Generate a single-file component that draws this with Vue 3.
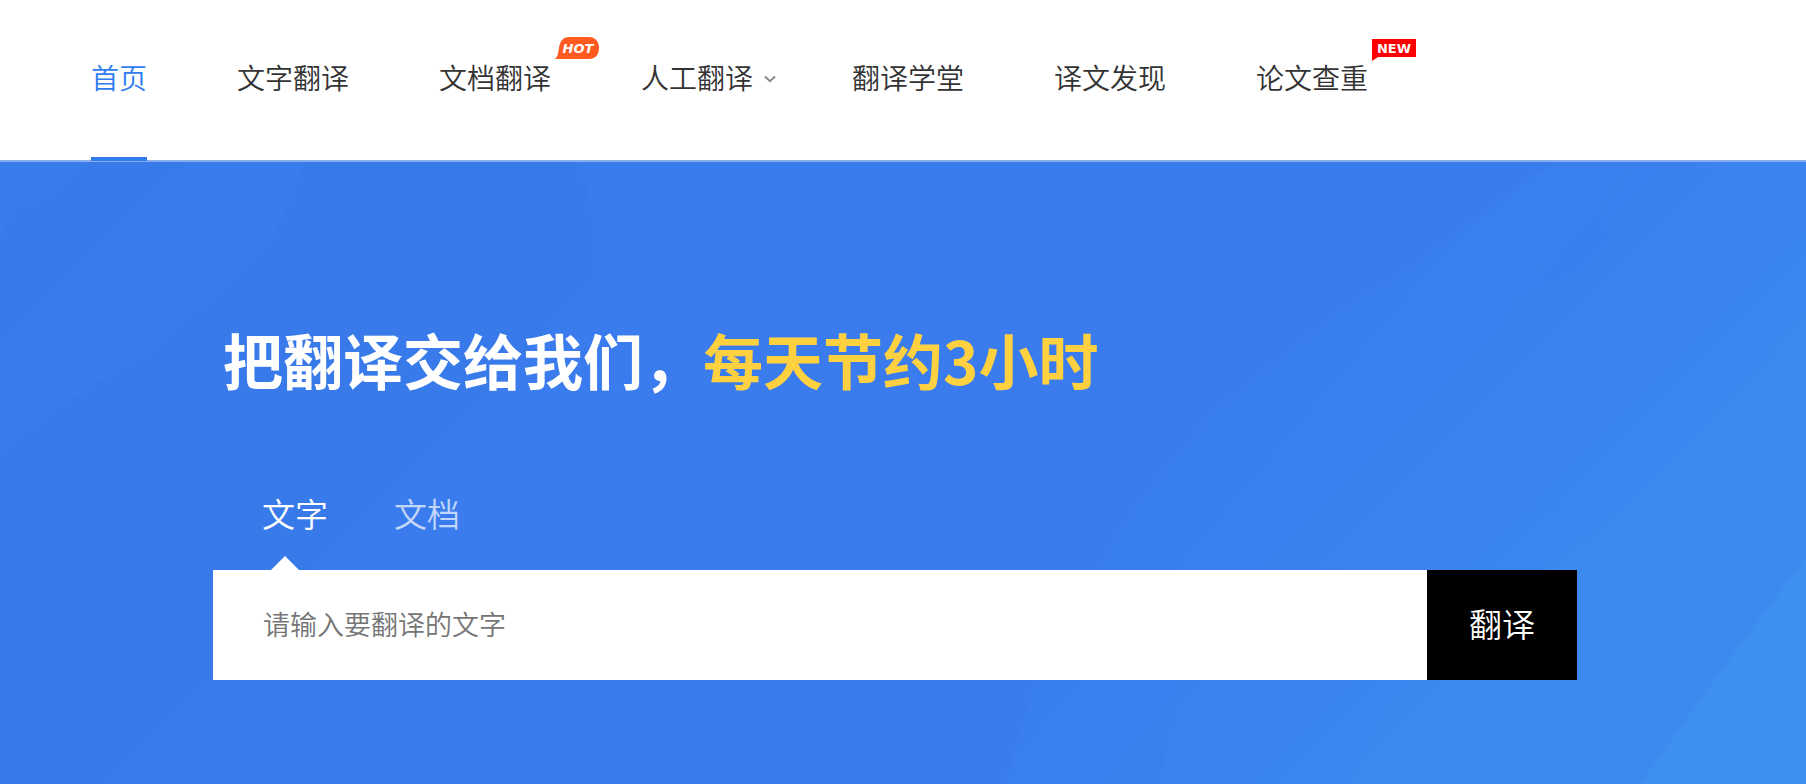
<script setup>
import { ref } from 'vue'

const navItems = [
  { label: '首页', active: true },
  { label: '文字翻译' },
  { label: '文档翻译', badge: 'hot' },
  { label: '人工翻译', dropdown: true },
  { label: '翻译学堂' },
  { label: '译文发现' },
  { label: '论文查重', badge: 'new' },
]
const tabs = ['文字', '文档']
const current = ref(0)
const query = ref('')
</script>

<template>
  <div class="page">
    <header class="header">
      <nav class="nav">
        <a
          v-for="item in navItems"
          :key="item.label"
          href="#"
          class="nav-link"
          :class="{ active: item.active, dropdown: item.dropdown }"
        >
          {{ item.label }}
          <svg v-if="item.dropdown" class="chevron" viewBox="0 0 12 8" aria-hidden="true">
            <path d="M1 1.5 L6 6.2 L11 1.5" fill="none" stroke="#888" stroke-width="2" />
          </svg>
          <svg v-if="item.badge === 'hot'" class="badge" viewBox="0 0 44 24">
            <path d="M14 0 H34 C40 0 44 4 44 11 C44 18 40 22 34 22 H0 C3 19 3 17 4 11 C5 4 8 0 14 0Z" fill="#ff5a1f" />
            <text x="23" y="16" class="badge-text hot">HOT</text>
          </svg>
          <svg v-if="item.badge === 'new'" class="badge" viewBox="0 0 44 24">
            <path d="M0 2 H44 V20 H6 L0 24Z" fill="#ff0000" />
            <text x="22" y="16" class="badge-text">NEW</text>
          </svg>
        </a>
      </nav>
    </header>

    <main class="hero">
      <svg class="backdrop" viewBox="0 0 1806 622" preserveAspectRatio="none" aria-hidden="true">
        <defs>
          <linearGradient id="mid" gradientUnits="userSpaceOnUse" x1="1250" y1="200" x2="1600" y2="500">
            <stop offset="0" stop-color="#397eee" />
            <stop offset="1" stop-color="#3b84ee" />
          </linearGradient>
          <linearGradient id="far" gradientUnits="userSpaceOnUse" x1="1400" y1="200" x2="1700" y2="500">
            <stop offset="0" stop-color="#3a80ef" />
            <stop offset="1" stop-color="#3c8aef" />
          </linearGradient>
        </defs>
        <rect width="1806" height="622" fill="#397aeb" />
        <path d="M0 0 H86 L30 46 L20 38 L0 76Z" fill="#3a7cec" />
        <path d="M187 0 H305 L275 70 L235 112 L150 187 L50 250 L0 290 V187Z" fill="#3a7ced" />
        <path d="M580 0 L594 60 L592 122 L320 405 L213 518 L105 622 H1806 V0Z" fill="#3a7ced" />
        <path d="M1553 0 L1405 110 L1340 150 L1215 250 L1140 340 L1100 405 L1035 520 L1005 622 H1806 V0Z" fill="url(#mid)" />
        <path d="M1640 0 L1560 120 L1410 215 L1290 330 L1225 405 L1175 540 L1160 622 H1806 V0Z" fill="url(#far)" />
        <path d="M1600 40 L1612 78 L1580 110 L1522 132Z" fill="#3a7fee" />
        <path d="M1806 150 L1700 270 L1620 350 L1540 410 L1390 540 L1350 622 H1806Z" fill="#3d8bef" opacity=".6" />
        <path d="M1806 395 L1720 510 L1640 622 H1806Z" fill="#3e8fef" />
      </svg>

      <div class="content">
        <h1 class="title">把翻译交给我们，<em>每天节约3小时</em></h1>
        <div class="tabs" role="tablist">
          <button
            v-for="(tab, i) in tabs"
            :key="tab"
            type="button"
            role="tab"
            class="tab"
            :class="{ selected: current === i }"
            :aria-selected="current === i"
            @click="current = i"
          >{{ tab }}</button>
        </div>
        <form class="search" @submit.prevent>
          <input v-model="query" class="field" type="text" aria-label="请输入要翻译的文字" placeholder="请输入要翻译的文字" />
          <button class="submit" type="submit">翻译</button>
        </form>
      </div>
    </main>
  </div>
</template>

<style>
body { margin: 0; }
</style>

<style scoped>
.page {
  display: flex;
  flex-direction: column;
  min-height: 100vh;
  font-family: "Noto Sans CJK SC", sans-serif;
  font-weight: 350;
}
.header {
  position: relative;
  z-index: 1;
  background: #fff;
  border-bottom: 2px solid #8aaeea;
}
.nav {
  display: flex;
  gap: 90px;
  padding-left: 91px;
}
.nav-link {
  position: relative;
  height: 160px;
  font-size: 28px;
  line-height: 154px;
  color: #333;
  white-space: nowrap;
  text-decoration: none;
}
.nav-link.active { color: #2e7cf0; }
.nav-link.active::after {
  content: "";
  position: absolute;
  left: 0;
  right: 0;
  bottom: -1px;
  height: 4px;
  background: #2e7cf0;
}
.nav-link.dropdown { padding-right: 9px; }
.chevron {
  position: absolute;
  top: 75px;
  right: -14px;
  width: 12px;
  height: 8px;
}
.badge {
  position: absolute;
  top: 37px;
  left: calc(100% + 4px);
  width: 44px;
  height: 24px;
}
.badge-text {
  font: 700 13px "DejaVu Sans", sans-serif;
  fill: #fff;
  text-anchor: middle;
}
.badge-text.hot { font-style: italic; }
.hero {
  position: relative;
  flex: 1;
  background: #3a7ced;
}
.backdrop {
  position: absolute;
  inset: 0;
  width: 100%;
  height: 100%;
}
.content {
  position: relative;
  padding: 152px 229px 104px 213px;
}
.title {
  margin: 0 0 76px;
  padding-left: 10px;
  font-size: 60px;
  font-weight: 700;
  line-height: 90px;
  color: #fff;
}
.title em {
  font-style: normal;
  color: #ffd03f;
}
.tabs {
  display: flex;
  gap: 66px;
  height: 90px;
  padding-left: 49px;
}
.tab {
  position: relative;
  height: 90px;
  padding: 0 0 24px;
  border: 0;
  background: none;
  font: 350 33px/66px "Noto Sans CJK SC", sans-serif;
  color: rgba(255, 255, 255, 0.7);
  cursor: pointer;
}
.tab.selected { color: #fff; }
.tab.selected::after {
  content: "";
  position: absolute;
  bottom: 0;
  left: 9px;
  border: 14px solid transparent;
  border-top: 0;
  border-bottom-color: #fff;
}
.search {
  display: flex;
  height: 110px;
}
.field {
  flex: 1;
  min-width: 0;
  padding: 0 50px 4px;
  border: 0;
  outline: 0;
  background: #fff;
  font: 350 27px "Noto Sans CJK SC", sans-serif;
  color: #333;
}
.field::placeholder { color: #757575; }
.submit {
  width: 150px;
  padding: 0 0 4px;
  border: 0;
  background: #000;
  color: #fff;
  font: 350 33px "Noto Sans CJK SC", sans-serif;
  cursor: pointer;
}
</style>
